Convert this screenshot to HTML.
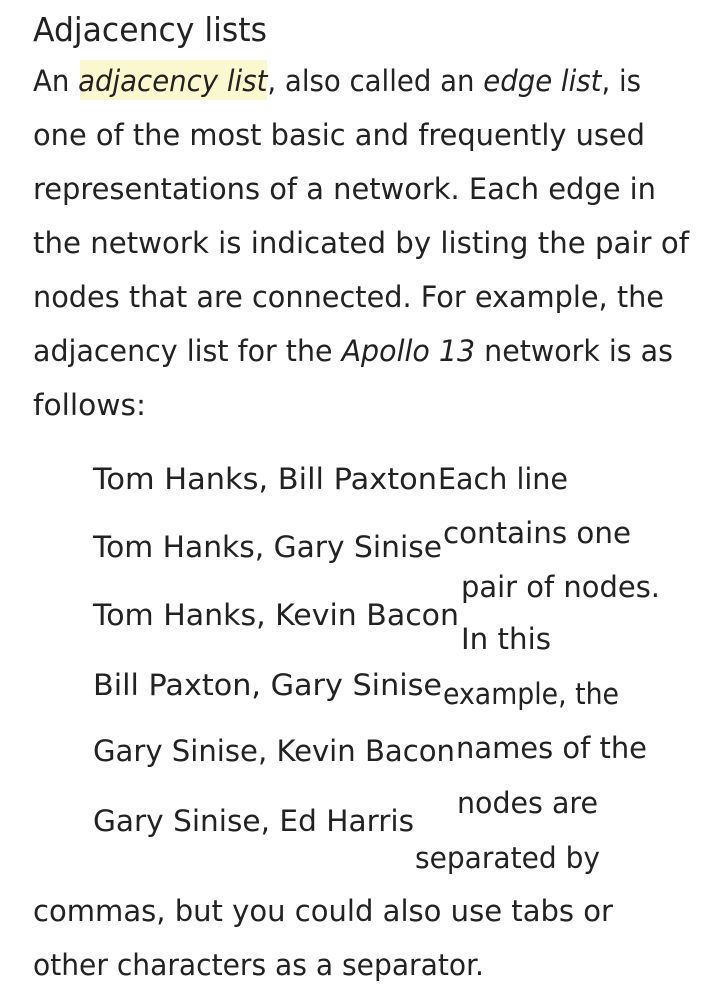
<!DOCTYPE html>
<html><head><meta charset="utf-8"><style>
html,body{margin:0;padding:0;background:#fff;width:719px;height:985px;overflow:hidden}
svg text{font-family:"DejaVu Sans","Liberation Sans",sans-serif;fill:#222;font-size:29px}
.i{font-style:italic}
</style></head><body>
<svg width="719" height="985" xmlns="http://www.w3.org/2000/svg">
<rect x="80" y="60" width="187" height="40" fill="#fbf8cf"/>
<text x="33" y="41" style="font-size:33px" textLength="234" lengthAdjust="spacingAndGlyphs">Adjacency lists</text>
<text x="33" y="91" textLength="608" lengthAdjust="spacingAndGlyphs">An <tspan class="i">adjacency list</tspan>, also called an <tspan class="i">edge list</tspan>, is</text>
<text x="33" y="145" textLength="612" lengthAdjust="spacingAndGlyphs">one of the most basic and frequently used</text>
<text x="33" y="199" textLength="623" lengthAdjust="spacingAndGlyphs">representations of a network. Each edge in</text>
<text x="33" y="253" textLength="656" lengthAdjust="spacingAndGlyphs">the network is indicated by listing the pair of</text>
<text x="33" y="307" textLength="631" lengthAdjust="spacingAndGlyphs">nodes that are connected. For example, the</text>
<text x="33" y="361" textLength="640" lengthAdjust="spacingAndGlyphs">adjacency list for the <tspan class="i">Apollo 13</tspan> network is as</text>
<text x="33" y="415" textLength="113" lengthAdjust="spacingAndGlyphs">follows:</text>

<text x="93" y="489" textLength="344" lengthAdjust="spacingAndGlyphs">Tom Hanks, Bill Paxton</text>
<text x="438" y="489" textLength="130" lengthAdjust="spacingAndGlyphs">Each line</text>
<text x="93" y="557" textLength="349" lengthAdjust="spacingAndGlyphs">Tom Hanks, Gary Sinise</text>
<text x="443" y="543" textLength="188" lengthAdjust="spacingAndGlyphs">contains one</text>
<text x="461" y="597" textLength="199" lengthAdjust="spacingAndGlyphs">pair of nodes.</text>
<text x="93" y="625" textLength="366" lengthAdjust="spacingAndGlyphs">Tom Hanks, Kevin Bacon</text>
<text x="461" y="649" textLength="90" lengthAdjust="spacingAndGlyphs">In this</text>
<text x="93" y="695" textLength="349" lengthAdjust="spacingAndGlyphs">Bill Paxton, Gary Sinise</text>
<text x="443" y="704" textLength="176" lengthAdjust="spacingAndGlyphs">example, the</text>
<text x="93" y="761" textLength="362" lengthAdjust="spacingAndGlyphs">Gary Sinise, Kevin Bacon</text>
<text x="456" y="758" textLength="191" lengthAdjust="spacingAndGlyphs">names of the</text>
<text x="93" y="831" textLength="321" lengthAdjust="spacingAndGlyphs">Gary Sinise, Ed Harris</text>
<text x="457" y="813" textLength="141" lengthAdjust="spacingAndGlyphs">nodes are</text>
<text x="415" y="868" textLength="185" lengthAdjust="spacingAndGlyphs">separated by</text>
<text x="33" y="921" textLength="580" lengthAdjust="spacingAndGlyphs">commas, but you could also use tabs or</text>
<text x="33" y="975" textLength="451" lengthAdjust="spacingAndGlyphs">other characters as a separator.</text>
</svg>
</body></html>
